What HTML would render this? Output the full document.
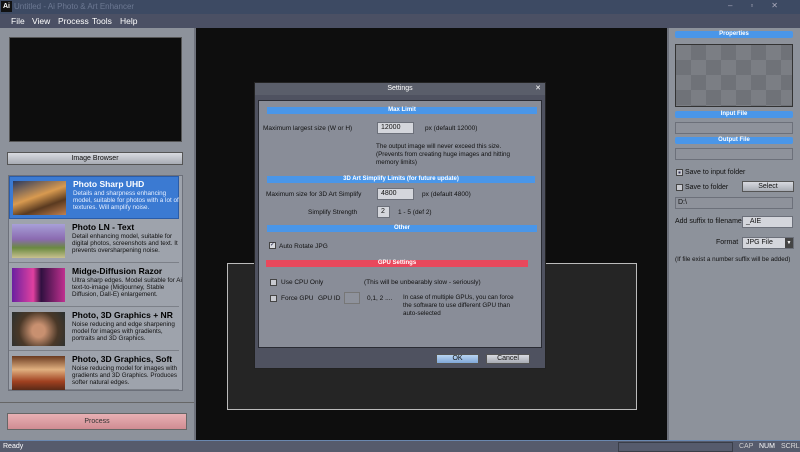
<!DOCTYPE html>
<html><head><style>
*{margin:0;padding:0;box-sizing:border-box}
body{width:800px;height:452px;overflow:hidden;position:relative;background:#8d929b;font-family:"Liberation Sans",sans-serif;font-size:7px;color:#111}
.a{position:absolute}
.d{font-size:6.5px}
.bar{position:absolute;background:#4a96e8;color:#fff;font-weight:bold;font-size:6px;text-align:center;line-height:7px;height:7px}
.in{position:absolute;background:#d4d6dc;border:1px solid #6c707a;font-size:7px;padding-left:3px;line-height:10px}
.cb{position:absolute;width:7px;height:7px;border:1px solid #444;background:#c8cad0}
.btn{position:absolute;background:linear-gradient(#d8dae0,#a8acb4);border:1px solid #555;text-align:center;font-size:7px}
.it{position:absolute;left:9px;width:170px;height:43px;background:#9ea3ac;border-bottom:1px solid #7c8088}
.it .th{position:absolute;left:3px;top:4px;width:53px;height:34px}
.it b{position:absolute;left:63px;top:2px;font-size:8.5px;color:#000}
.it span{position:absolute;left:63px;top:13px;width:110px;font-size:6.3px;line-height:7px;color:#111}
</style></head><body>
<div class="a" style="left:0;top:0;width:800px;height:14px;background:#3d4a63"></div>
<div class="a" style="left:1px;top:1px;width:11px;height:11px;background:#111;color:#fff;font-size:7px;font-weight:bold;line-height:11px;text-align:center">Ai</div>
<div class="a" style="left:14px;top:2px;color:#6c7892;font-size:8px">Untitled - Ai Photo &amp; Art Enhancer</div>
<div class="a" style="left:728px;top:1px;color:#aab;font-size:8px;letter-spacing:18px">–▫✕</div>
<div class="a" style="left:0;top:14px;width:800px;height:14px;background:#4b5064;color:#fff;font-size:8.5px;line-height:14px">
<span class="a" style="left:11px">File</span><span class="a" style="left:32px">View</span><span class="a" style="left:58px">Process</span><span class="a" style="left:92px">Tools</span><span class="a" style="left:120px">Help</span></div>
<div class="a" style="left:194px;top:28px;width:2px;height:412px;background:#6e727c"></div>
<div class="a" style="left:9px;top:37px;width:173px;height:105px;background:#0d0d0d;border:1px solid #555"></div>
<div class="btn" style="left:7px;top:152px;width:176px;height:13px;line-height:11px">Image Browser</div>
<div class="a" style="left:8px;top:175px;width:175px;height:216px;background:#9ea3ac;border:1px solid #6c707a"></div>
<div class="it" style="top:176px;background:#3b7ad2;border:1px solid #2a5ca8"><div class="th" style="background:linear-gradient(160deg,#2a3a60,#d89a50 45%,#5a3a20 70%,#c08050)"></div><b style="color:#fff">Photo Sharp UHD</b><span style="color:#e8f0ff">Details and sharpness enhancing model, suitable for photos with a lot of textures. Will amplify noise.</span></div>
<div class="it" style="top:220px"><div class="th" style="background:linear-gradient(#a8a0d8,#8a6ab0 45%,#6a8a40 70%,#c8c090)"></div><b>Photo LN - Text</b><span>Detail enhancing model, suitable for digital photos, screenshots and text. It prevents oversharpening noise.</span></div>
<div class="it" style="top:264px"><div class="th" style="background:linear-gradient(90deg,#6a20a0,#e040a0 40%,#301040 55%,#c03090)"></div><b>Midge-Diffusion Razor</b><span>Ultra sharp edges. Model suitable for Ai text-to-image (Midjourney, Stable Diffusion, Dall-E) enlargement.</span></div>
<div class="it" style="top:308px"><div class="th" style="background:radial-gradient(circle at 50% 55%,#c89070 20%,#4a3828 60%,#2a3030)"></div><b>Photo, 3D Graphics + NR</b><span>Noise reducing and edge sharpening model for images with gradients, portraits and 3D Graphics.</span></div>
<div class="it" style="top:352px;height:38px"><div class="th" style="background:linear-gradient(#6a3a20,#e0b080 40%,#a04020 75%,#5a2a18)"></div><b>Photo, 3D Graphics, Soft</b><span>Noise reducing model for images with gradients and 3D Graphics. Produces softer natural edges.</span></div>
<div class="a" style="left:0;top:402px;width:194px;height:1px;background:#666"></div>
<div class="a" style="left:7px;top:413px;width:180px;height:17px;background:linear-gradient(#e8b0b4,#d08c92);border:1px solid #666;text-align:center;line-height:15px;font-size:7px;color:#333">Process</div>
<div class="a" style="left:196px;top:28px;width:471px;height:412px;background:#0e0e0e"></div>
<div class="a" style="left:227px;top:263px;width:410px;height:147px;background:#252525;border:1px solid #bbb"></div>
<div class="a" style="left:254px;top:82px;width:292px;height:287px;background:#4f5260;border:1px solid #222"></div>
<div class="a" style="left:255px;top:83px;width:290px;height:12px;background:#5a5e6a;color:#fff;text-align:center;font-size:7px;line-height:12px">Settings<span class="a" style="right:4px;top:0">✕</span></div>
<div class="a" style="left:258px;top:100px;width:284px;height:248px;background:#898d98;border:1px solid #2a2c34"></div>
<div class="bar" style="left:267px;top:107px;width:270px">Max Limit</div>
<div class="a d" style="left:263px;top:125px">Maximum largest size (W or H)</div>
<div class="in" style="left:377px;top:122px;width:37px;height:12px">12000</div>
<div class="a d" style="left:425px;top:125px">px (default 12000)</div>
<div class="a" style="left:376px;top:143px;width:145px;line-height:8px;font-size:6.3px">The output image will never exceed this size. (Prevents from creating huge images and hitting memory limits)</div>
<div class="bar" style="left:267px;top:176px;width:268px">3D Art Simplify Limits (for future update)</div>
<div class="a d" style="left:266px;top:191px">Maximum size for 3D Art Simplify</div>
<div class="in" style="left:377px;top:188px;width:37px;height:12px">4800</div>
<div class="a d" style="left:422px;top:191px">px (default 4800)</div>
<div class="a d" style="left:308px;top:209px">Simplify Strength</div>
<div class="in" style="left:377px;top:206px;width:13px;height:12px">2</div>
<div class="a d" style="left:398px;top:209px">1 - 5 (def 2)</div>
<div class="bar" style="left:267px;top:225px;width:270px">Other</div>
<div class="cb" style="left:269px;top:242px;background:#d8dae0;font-size:6px;line-height:5px;color:#224">✓</div>
<div class="a d" style="left:279px;top:243px">Auto Rotate JPG</div>
<div class="bar" style="left:266px;top:260px;width:262px;background:#e8485c">GPU Settings</div>
<div class="cb" style="left:270px;top:279px"></div>
<div class="a d" style="left:281px;top:279px">Use CPU Only</div>
<div class="a d" style="left:364px;top:279px">(This will be unbearably slow - seriously)</div>
<div class="cb" style="left:270px;top:295px"></div>
<div class="a d" style="left:281px;top:295px">Force GPU</div>
<div class="a d" style="left:318px;top:295px">GPU ID</div>
<div class="a" style="left:344px;top:292px;width:16px;height:12px;border:1px solid #777;background:#8e929c"></div>
<div class="a d" style="left:367px;top:295px">0,1, 2 ....</div>
<div class="a" style="left:403px;top:294px;width:115px;line-height:8px;font-size:6.3px">In case of multiple GPUs, you can force the software to use different GPU than auto-selected</div>
<div class="btn" style="left:436px;top:354px;width:43px;height:10px;line-height:8px;background:linear-gradient(#b8d4f0,#80a8d8)">OK</div>
<div class="btn" style="left:486px;top:354px;width:44px;height:10px;line-height:8px">Cancel</div>
<div class="a" style="left:667px;top:28px;width:2px;height:412px;background:#6e727c"></div>
<div class="bar" style="left:675px;top:31px;width:118px;border-radius:2px">Properties</div>
<div class="a" style="left:675px;top:44px;width:118px;height:63px;border:1px solid #333;background-color:#7b7e84;background-image:linear-gradient(45deg,#6f7278 25%,transparent 25%,transparent 75%,#6f7278 75%),linear-gradient(45deg,#6f7278 25%,transparent 25%,transparent 75%,#6f7278 75%);background-size:30px 30px;background-position:0 0,15px 15px"></div>
<div class="bar" style="left:675px;top:111px;width:118px;border-radius:2px">Input File</div>
<div class="a" style="left:675px;top:122px;width:118px;height:12px;border:1px solid #6c707a;background:#8e929b"></div>
<div class="bar" style="left:675px;top:137px;width:118px;border-radius:2px">Output File</div>
<div class="a" style="left:675px;top:148px;width:118px;height:12px;border:1px solid #6c707a;background:#8e929b"></div>
<div class="cb" style="left:676px;top:169px;background:#c8cad0;box-shadow:inset 0 0 0 1.5px #c8cad0,inset 0 0 0 4px #335"></div>
<div class="a" style="left:685px;top:169px">Save to input folder</div>
<div class="cb" style="left:676px;top:184px"></div>
<div class="a" style="left:685px;top:184px">Save to folder</div>
<div class="btn" style="left:742px;top:181px;width:52px;height:11px;line-height:9px">Select</div>
<div class="a" style="left:675px;top:197px;width:118px;height:12px;border:1px solid #6c707a;background:#8e929b;padding-left:2px;line-height:10px">D:\</div>
<div class="a" style="left:675px;top:218px">Add suffix to filename</div>
<div class="in" style="left:742px;top:216px;width:51px;height:12px">_AIE</div>
<div class="a" style="left:716px;top:239px">Format</div>
<div class="in" style="left:742px;top:237px;width:52px;height:12px">JPG File<span class="a" style="right:0;top:0;width:8px;height:10px;background:#444;color:#fff;font-size:5px;text-align:center">▼</span></div>
<div class="a" style="left:675px;top:256px;font-size:6.3px">(If file exist a number suffix will be added)</div>
<div class="a" style="left:0;top:440px;width:800px;height:12px;background:#565b6c;border-top:1px solid #6a88b0;color:#fff;font-size:7px;line-height:11px"><span class="a" style="left:3px">Ready</span>
<span class="a" style="left:618px;top:1px;width:115px;height:10px;border:1px solid #3a3e48"></span>
<span class="a" style="left:739px;color:#ccc">CAP</span><span class="a" style="left:759px">NUM</span><span class="a" style="left:781px;color:#ddd">SCRL</span></div>
</body></html>
